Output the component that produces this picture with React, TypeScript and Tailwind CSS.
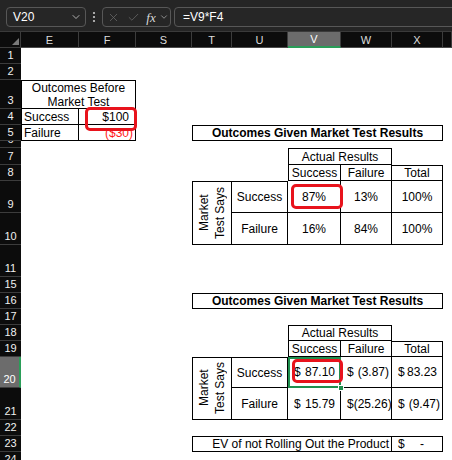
import React from "react";
import { X, Check, ChevronDown } from "lucide-react";

const font = "font-['Liberation_Sans',Arial,sans-serif]";

const rowHeaders: { label: string; cls: string; sel?: boolean }[] = [
  { label: "1", cls: "row-start-2" },
  { label: "2", cls: "row-start-3" },
  { label: "3", cls: "row-start-4" },
  { label: "4", cls: "row-start-5" },
  { label: "5", cls: "row-start-6" },
  { label: "6", cls: "row-start-7" },
  { label: "7", cls: "row-start-8" },
  { label: "8", cls: "row-start-9" },
  { label: "9", cls: "row-start-10" },
  { label: "10", cls: "row-start-11" },
  { label: "11", cls: "row-start-12" },
  { label: "15", cls: "row-start-13" },
  { label: "16", cls: "row-start-14" },
  { label: "17", cls: "row-start-15" },
  { label: "18", cls: "row-start-16" },
  { label: "19", cls: "row-start-17" },
  { label: "20", cls: "row-start-18", sel: true },
  { label: "21", cls: "row-start-19" },
  { label: "22", cls: "row-start-20" },
  { label: "23", cls: "row-start-21" },
  { label: "24", cls: "row-start-22" },
];

const colHeaders: { label: string; cls: string; sel?: boolean }[] = [
  { label: "E", cls: "col-start-2" },
  { label: "F", cls: "col-start-3" },
  { label: "S", cls: "col-start-4" },
  { label: "T", cls: "col-start-5" },
  { label: "U", cls: "col-start-6" },
  { label: "V", cls: "col-start-7", sel: true },
  { label: "W", cls: "col-start-8" },
  { label: "X", cls: "col-start-9" },
  { label: "", cls: "col-start-10" },
];

function Acct({ v, neg, cls }: { v: string; neg?: boolean; cls: string }) {
  return (
    <div className={`${cls} border-black flex items-center justify-between pl-[6px] pr-[2px]`}>
      <span>$</span>
      <span className="flex">
        {v}
        {neg ? null : <span className="inline-block w-[3px]" />}
      </span>
    </div>
  );
}

export default function App() {
  return (
    <div className={`w-[452px] h-[460px] overflow-hidden bg-white ${font}`}>
      {/* Formula bar */}
      <div className="h-[32px] bg-[#252525] border-b border-[#3a3a3a] flex items-start pt-[7px] pl-[6px] overflow-hidden">
        <div className="w-[80px] h-[20px] shrink-0 rounded-[4px] border border-[#575757] bg-[#262626] flex items-center justify-between pl-[6px] pr-[3px]">
          <span className="text-[12px] text-white leading-none">V20</span>
          <ChevronDown size={12} strokeWidth={1.6} className="text-[#cfcfcf]" />
        </div>
        <div className="w-[16px] h-[20px] shrink-0 flex items-center justify-center">
          <svg width="4" height="12" viewBox="0 0 4 12">
            <circle cx="2" cy="2" r="1.1" fill="#c8c8c8" />
            <circle cx="2" cy="6" r="1.1" fill="#c8c8c8" />
            <circle cx="2" cy="10" r="1.1" fill="#c8c8c8" />
          </svg>
        </div>
        <div className="w-[69px] h-[20px] shrink-0 rounded-[4px] border border-[#575757] bg-[#262626] flex items-center">
          <div className="w-[20px] flex justify-center">
            <X size={13} strokeWidth={1.4} className="text-[#6a6a6a]" />
          </div>
          <div className="w-[20px] flex justify-center">
            <Check size={13} strokeWidth={1.4} className="text-[#6a6a6a]" />
          </div>
          <div className="w-[16px] flex justify-center font-['Liberation_Serif',serif] italic text-[13px] text-[#d8d8d8] leading-none">
            fx
          </div>
          <div className="w-[10px] flex justify-center">
            <ChevronDown size={10} strokeWidth={1.6} className="text-[#bdbdbd]" />
          </div>
        </div>
        <div className="ml-[3px] w-[300px] h-[20px] shrink-0 rounded-[4px] border border-[#575757] bg-[#262626] flex items-center pl-[8px]">
          <span className="text-[12px] text-white leading-none">=V9*F4</span>
        </div>
      </div>

      {/* Sheet */}
      <div className="relative">
        <div className="grid grid-cols-[21px_58px_57px_56px_40px_56px_53px_51px_51px_1fr] grid-rows-[16px_16px_16px_29px_16px_16px_7px_17px_16px_32px_32px_32px_16px_16px_16px_16px_16px_31px_32px_16px_16px_16px] text-[12px] text-black leading-[14px]">
          {/* corner */}
          <div className="col-start-1 row-start-1 bg-[#0c0c0c] border-r border-b border-[#3c3c3c] relative">
            <svg className="absolute left-0 top-0" width="21" height="16" viewBox="0 0 21 16">
              <polygon points="12,13 19,13 19,6" fill="#7a7a7a" />
            </svg>
          </div>
          {colHeaders.map((c) => (
            <div
              key={c.cls}
              className={`${c.cls} row-start-1 flex items-center justify-center text-[11px] border-r border-r-[#3c3c3c] ${
                c.sel
                  ? "bg-[#6c6c6c] text-white border-b-2 border-b-[#2a9d58]"
                  : "bg-[#0c0c0c] text-[#dcdcdc] border-b border-b-[#4a4a4a]"
              }`}
            >
              {c.label}
            </div>
          ))}
          {rowHeaders.map((r) => (
            <div
              key={r.cls}
              className={`col-start-1 ${r.cls} flex items-end justify-center overflow-hidden text-[11px] leading-[12px] pb-[2px] border-b border-b-[#3c3c3c] ${
                r.sel ? "bg-[#6c6c6c] text-white border-r-2 border-r-[#2a9d58]" : "bg-[#0c0c0c] text-[#f0f0f0]"
              }`}
            >
              {r.label}
            </div>
          ))}

          {/* Outcomes Before Market Test */}
          <div className="col-start-2 col-span-2 row-start-4 border border-black flex flex-col items-center justify-center">
            <span>Outcomes Before</span>
            <span>Market Test</span>
          </div>
          <div className="col-start-2 row-start-5 border-l border-r border-b border-black flex items-center pl-[2px]">Success</div>
          <div className="col-start-3 row-start-5 border-r border-b border-black flex items-center justify-end pr-[2px]">
            $100<span className="invisible">)</span>
          </div>
          <div className="col-start-2 row-start-6 border-l border-r border-b border-black flex items-center pl-[2px]">Failure</div>
          <div className="col-start-3 row-start-6 border-r border-b border-black flex items-center justify-end pr-[2px] text-[#ff1a1a]">
            ($30)
          </div>

          {/* Table 1 */}
          <div className="col-start-5 col-span-5 row-start-6 border border-black flex items-center justify-center font-bold">
            Outcomes Given Market Test Results
          </div>
          <div className="col-start-7 col-span-2 row-start-8 border border-black flex items-center justify-center">Actual Results</div>
          <div className="col-start-7 row-start-9 border-l border-r border-b border-black flex items-center justify-center">Success</div>
          <div className="col-start-8 row-start-9 border-r border-b border-black flex items-center justify-center">Failure</div>
          <div className="col-start-9 row-start-9 border-t border-r border-b border-black flex items-center justify-center">Total</div>
          <div className="col-start-5 row-start-10 row-span-2 border border-black flex items-center justify-center">
            <div className="[writing-mode:vertical-rl] rotate-180 leading-[16px] text-center">
              Market
              <br />
              Test Says
            </div>
          </div>
          <div className="col-start-6 row-start-10 border-t border-r border-b border-black flex items-center justify-center">Success</div>
          <div className="col-start-6 row-start-11 border-r border-b border-black flex items-center justify-center">Failure</div>
          <div className="col-start-7 row-start-10 border-r border-b border-black flex items-center justify-center">87%</div>
          <div className="col-start-8 row-start-10 border-r border-b border-black flex items-center justify-center">13%</div>
          <div className="col-start-9 row-start-10 border-r border-b border-black flex items-center justify-center">100%</div>
          <div className="col-start-7 row-start-11 border-r border-b border-black flex items-center justify-center">16%</div>
          <div className="col-start-8 row-start-11 border-r border-b border-black flex items-center justify-center">84%</div>
          <div className="col-start-9 row-start-11 border-r border-b border-black flex items-center justify-center">100%</div>

          {/* Table 2 */}
          <div className="col-start-5 col-span-5 row-start-14 border border-black flex items-center justify-center font-bold">
            Outcomes Given Market Test Results
          </div>
          <div className="col-start-7 col-span-2 row-start-16 border border-black flex items-center justify-center">Actual Results</div>
          <div className="col-start-7 row-start-17 border-l border-r border-b border-black flex items-center justify-center">Success</div>
          <div className="col-start-8 row-start-17 border-r border-b border-black flex items-center justify-center">Failure</div>
          <div className="col-start-9 row-start-17 border-t border-r border-b border-black flex items-center justify-center">Total</div>
          <div className="col-start-5 row-start-18 row-span-2 border border-black flex items-center justify-center">
            <div className="[writing-mode:vertical-rl] rotate-180 leading-[16px] text-center">
              Market
              <br />
              Test Says
            </div>
          </div>
          <div className="col-start-6 row-start-18 border-t border-r border-b border-black flex items-center justify-center">Success</div>
          <div className="col-start-6 row-start-19 border-r border-b border-black flex items-center justify-center">Failure</div>
          <Acct cls="col-start-7 row-start-18 border-r border-b" v="87.10" />
          <Acct cls="col-start-8 row-start-18 border-r border-b" v="(3.87)" neg />
          <Acct cls="col-start-9 row-start-18 border-r border-b" v="83.23" />
          <Acct cls="col-start-7 row-start-19 border-r border-b" v="15.79" />
          <Acct cls="col-start-8 row-start-19 border-r border-b" v="(25.26)" neg />
          <Acct cls="col-start-9 row-start-19 border-r border-b" v="(9.47)" neg />

          <div className="col-start-5 col-span-4 row-start-21 border border-black flex items-center justify-end pr-[2px]">
            EV of not Rolling Out the Product
          </div>
          <div className="col-start-9 row-start-21 border-t border-r border-b border-black flex items-center justify-between pl-[6px] pr-[18px]">
            <span>$</span>
            <span>-</span>
          </div>
        </div>

        {/* overlays */}
        <div className="absolute left-[85px] top-[75px] w-[52px] h-[24px] border-[3px] border-[#e8131c] rounded-[5px]" />
        <div className="absolute left-[291px] top-[152px] w-[52px] h-[25px] border-[3px] border-[#e8131c] rounded-[5px]" />
        <div className="absolute left-[288px] top-[325px] w-[53px] h-[31px] border-2 border-[#1f8f4e]" />
        <div className="absolute left-[292px] top-[327px] w-[51px] h-[24px] border-[3px] border-[#e8131c] rounded-[5px]" />
        <div className="absolute left-[338px] top-[353px] w-[6px] h-[6px] bg-[#1f8f4e] border border-white" />
      </div>
    </div>
  );
}
